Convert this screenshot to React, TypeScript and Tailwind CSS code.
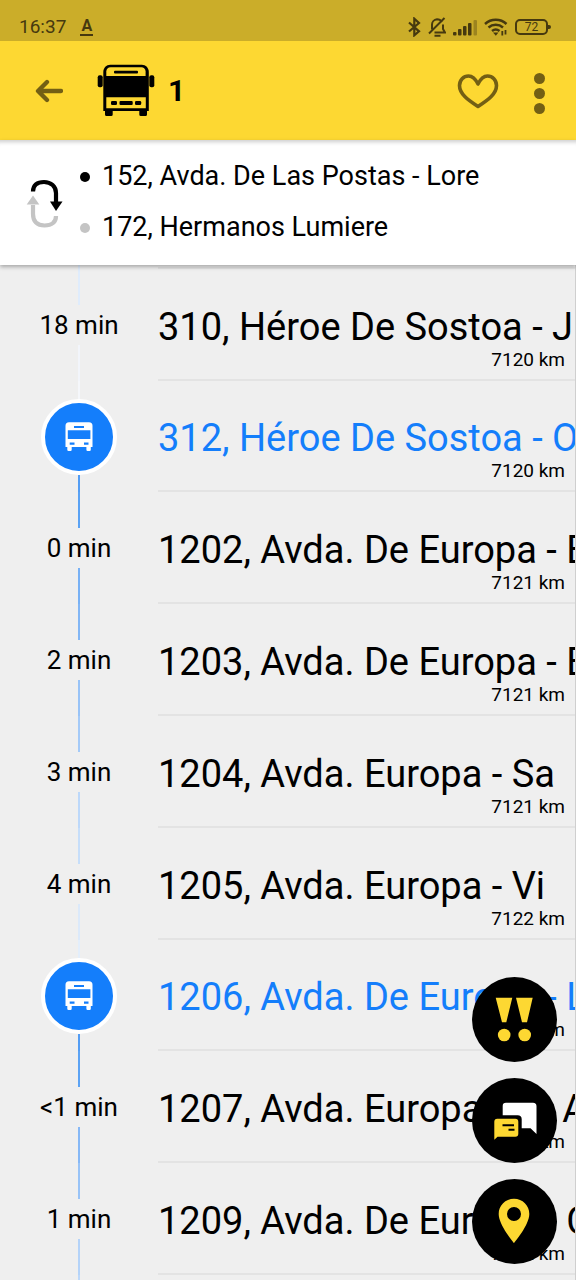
import clsx from "clsx";

interface Stop {
  name: string;
  distance: string;
  // Waiting time; stops without one have a bus standing at them
  eta?: string;
  lineAbove: string;
  lineBelow: string;
}

const stops: Stop[] = [
  { name: "310, Héroe De Sostoa - J", distance: "7120 km", eta: "18 min", lineAbove: "bg-[#dfecfc]", lineBelow: "bg-[#f2f5fb]" },
  { name: "312, Héroe De Sostoa - O", distance: "7120 km", lineAbove: "bg-[#f5f7fb]", lineBelow: "bg-[#539df4]" },
  { name: "1202, Avda. De Europa - E", distance: "7121 km", eta: "0 min", lineAbove: "bg-[#5aa2f4]", lineBelow: "bg-[#78b1f5]" },
  { name: "1203, Avda. De Europa - E", distance: "7121 km", eta: "2 min", lineAbove: "bg-[#82b6f5]", lineBelow: "bg-[#98c3f7]" },
  { name: "1204, Avda. Europa - Sa", distance: "7121 km", eta: "3 min", lineAbove: "bg-[#a4caf8]", lineBelow: "bg-[#bcd8fa]" },
  { name: "1205, Avda. Europa - Vi", distance: "7122 km", eta: "4 min", lineAbove: "bg-[#c6defa]", lineBelow: "bg-[#dbe9fa]" },
  { name: "1206, Avda. De Europa - L", distance: "7122 km", lineAbove: "bg-[#e3eefb]", lineBelow: "bg-[#539df4]" },
  { name: "1207, Avda. Europa - La A", distance: "7122 km", eta: "<1 min", lineAbove: "bg-[#5ca3f4]", lineBelow: "bg-[#86b8f6]" },
  { name: "1209, Avda. De Europa - C", distance: "7122 km", eta: "1 min", lineAbove: "bg-[#98c3f7]", lineBelow: "bg-[#b4d3f9]" },
];

function StatusBar() {
  return (
    <div className="flex h-[41px] shrink-0 items-center bg-[#cbad29] pt-3 pr-[25px] pl-[19px] text-[#46390f]">
      <span className="text-[19px] leading-6">16:37</span>
      <span className="ml-3.5 flex w-[13px] flex-col items-center border-b-2 border-current text-base leading-4 font-bold">
        A
      </span>
      <div className="ml-auto flex items-center gap-[7px]">
        <svg className="h-5 w-[13px]" viewBox="0 0 13 20" fill="none" stroke="currentColor" strokeWidth="2.2">
          <path d="m1 5.5 10 8.8-4.7 4V1.7L11 6 1 14.5" />
        </svg>
        <svg className="h-5 w-[18px]" viewBox="0 0 18 20" fill="none" stroke="currentColor" strokeWidth="2">
          <path d="M4 12.5V8a5.5 5.5 0 0 1 5-5.7c2.2 0 3.8 1 4.7 2.7M15 7.5V12l2 3.5H6.5" />
          <path d="M16.5 1 1 16.5M6.5 18.7h6" />
        </svg>
        <svg className="h-5 w-6" viewBox="0 0 24 20" fill="currentColor">
          <rect x="0" y="15" width="3.5" height="3.5" rx="1" />
          <rect x="5" y="12" width="3.5" height="6.5" rx="1" />
          <rect x="10" y="9" width="3.5" height="9.5" rx="1" />
          <rect x="15" y="6" width="3.5" height="12.5" rx="1" />
          <rect x="20.5" y="3" width="3.5" height="15.5" rx="1" opacity="0.35" />
        </svg>
        <svg className="h-5 w-6" viewBox="0 0 24 20" fill="none" stroke="currentColor" strokeWidth="2.5">
          <path d="M1 7a16 16 0 0 1 21.5 0M4.5 10.5a11 11 0 0 1 14.5 0M8 14a6 6 0 0 1 7.5 0" />
          <path d="m9 15.5 2.8 3.2 2.7-3.2Z" fill="currentColor" stroke="none" />
          <path d="M18.3 14v4.5M21.5 13v4.5" strokeWidth="1.8" />
        </svg>
        <span className="flex items-center">
          <span className="flex h-4 w-[33px] items-center justify-center rounded-[5px] border-2 border-current text-xs leading-3">
            72
          </span>
          <span className="h-1 w-[3px] rounded-r-sm bg-current" />
        </span>
      </div>
    </div>
  );
}

function LineBusIcon() {
  return (
    <svg className="h-[53px] w-[58px]" viewBox="0 0 58 53">
      <rect x="0.7" y="11.3" width="5" height="12" rx="2" />
      <rect x="52.3" y="11.3" width="5" height="12" rx="2" />
      <path d="M6.3 8c0-4 3-7.2 7-7.2h31.5c4 0 7 3.2 7 7.2v39H6.3Z" />
      <path d="M8 44h7.7v6.5a1.5 1.5 0 0 1-1.5 1.5H9.5A1.5 1.5 0 0 1 8 50.5ZM42.3 44H50v6.5a1.5 1.5 0 0 1-1.5 1.5h-4.7a1.5 1.5 0 0 1-1.5-1.5Z" />
      <g fill="#fdd832">
        <path d="M9.3 12V7.5c0-2.5 1.8-4.3 4.3-4.3h30.7c2.5 0 4.3 1.8 4.3 4.3V12Z" />
        <path d="M9.3 33.3h39.5v10.9H9.3Z" />
      </g>
      <rect x="17" y="6.7" width="24" height="2.8" rx="1" />
      <rect x="14" y="37" width="6" height="4" rx="1.3" />
      <rect x="22.5" y="37" width="13.2" height="4" rx="1" />
      <rect x="38" y="37" width="6.2" height="4" rx="1.3" />
    </svg>
  );
}

function AppBar() {
  return (
    <header className="flex h-[99px] shrink-0 items-center bg-[#fdd832] pr-[25px] pl-[35px] text-[#735f14]">
      <button type="button" aria-label="Back">
        <svg className="h-6 w-7" viewBox="0 0 28 24" fill="none" stroke="currentColor" strokeWidth="4.3" strokeLinecap="round" strokeLinejoin="round">
          <path d="M26 12H4M12 3l-9 9 9 9" />
        </svg>
      </button>
      <div className="ml-[34px] flex items-center gap-[13px] text-black">
        <LineBusIcon />
        <h1 className="text-[30px] leading-8 font-bold">1</h1>
      </div>
      <div className="ml-auto flex items-center gap-7">
        <button type="button" aria-label="Add to favourites">
          <svg className="h-9 w-[42px]" viewBox="0 0 42 36" fill="none" stroke="currentColor" strokeWidth="3.6" strokeLinejoin="round">
            <path d="M21 11C18.5 6 15.5 3 11.5 3 6.5 3 2.5 7 2.5 12.5c0 8.5 8.5 14.5 18.5 21 10-6.5 18.5-12.5 18.5-21C39.5 7 35.5 3 30.5 3c-4 0-7 3-9.5 8Z" />
          </svg>
        </button>
        <button type="button" aria-label="More options" className="flex w-6 flex-col items-center gap-1 pt-1.5">
          <span className="size-[11px] rounded-full bg-current" />
          <span className="size-[11px] rounded-full bg-current" />
          <span className="size-[11px] rounded-full bg-current" />
        </button>
      </div>
    </header>
  );
}

function RoutePanel() {
  return (
    <section className="z-10 flex shrink-0 items-center bg-white pt-[11px] pb-3 pl-[25px] shadow-[0_2px_4px_rgba(0,0,0,0.3),inset_0_6px_4px_-4px_rgba(0,0,0,0.2)]">
      <button type="button" aria-label="Change direction">
        <svg className="h-[52px] w-10" viewBox="0 -4 40 52" fill="none" strokeWidth="4.2">
          <path d="M8 11.5C8 5 12 2 19 2s12 4.5 12 11v10" stroke="#000" />
          <path d="M25 21.5h12.5L31 31Z" fill="#000" />
          <path d="M31 36c0 6-4 9.5-11.5 9.5S8 41.5 8 34V25" stroke="#c4c4c4" />
          <path d="M1.7 24.5h12.6L8 15.5Z" fill="#c4c4c4" />
        </svg>
      </button>
      <ul className="ml-[15px] min-w-0 text-[27px] leading-[51px] whitespace-nowrap">
        <li className="flex items-center gap-3">
          <span className="size-[10px] shrink-0 rounded-full bg-black" />
          152, Avda. De Las Postas - Lore
        </li>
        <li className="flex items-center gap-3">
          <span className="size-[10px] shrink-0 rounded-full bg-[#c4c4c4]" />
          172, Hermanos Lumiere
        </li>
      </ul>
    </section>
  );
}

function BusMarker() {
  return (
    <div className="flex size-[76px] items-center justify-center rounded-full border-4 border-white bg-[#147efb]">
      <svg className="h-[29px] w-7" viewBox="0 0 28 29" fill="#fff">
        <path
          fillRule="evenodd"
          d="M4 .3h20a3.5 3.5 0 0 1 3.5 3.5V25h-1.7v2.7a1.2 1.2 0 0 1-1.2 1.2h-2a1.2 1.2 0 0 1-1.2-1.2V25H6.7v2.7a1.2 1.2 0 0 1-1.2 1.2h-2a1.2 1.2 0 0 1-1.2-1.2V25H.5V3.8A3.5 3.5 0 0 1 4 .3ZM9 4v2h10V4ZM2.8 8.3V17h22.6V8.3ZM4.7 20.5v2.3h4.8v-2.3ZM19 20.5v2.3h4.5v-2.3Z"
        />
      </svg>
    </div>
  );
}

function StopRow({ stop }: { stop: Stop }) {
  const hasBus = !stop.eta;

  return (
    <li className={clsx("flex", hasBus ? "h-[111px]" : "h-28")}>
      <div className="flex w-[158px] shrink-0 flex-col items-center">
        <span className={clsx("w-0.5 flex-1", stop.lineAbove)} />
        {hasBus ? (
          <BusMarker />
        ) : (
          <span className="text-[26px] leading-10">{stop.eta}</span>
        )}
        <span className={clsx("w-0.5 flex-1", stop.lineBelow)} />
      </div>
      <div className="flex min-w-0 flex-1 flex-col justify-end border-b-2 border-[#e3e3e3] pb-2">
        <p
          className={clsx(
            "overflow-hidden text-[38px] leading-11 whitespace-nowrap",
            hasBus && "text-[#147efb]",
          )}
        >
          {stop.name}
        </p>
        <p className="pr-[10px] text-right text-[19px] leading-[22px]">
          {stop.distance}
        </p>
      </div>
    </li>
  );
}

function FloatingActions() {
  const button = "size-[85px] rounded-full bg-black";

  return (
    <div className="fixed right-[19px] bottom-4 z-20 flex flex-col gap-4">
      <button type="button" aria-label="Alerts" className={button}>
        <svg viewBox="0 0 85 85" fill="#fdd832">
          <path d="M23.7 20.7h16.6l-6 24.6H30ZM44 20.7h16.7L55 45.3h-5Z" />
          <circle cx="32.2" cy="58" r="6.3" />
          <circle cx="52.7" cy="58" r="6.3" />
        </svg>
      </button>
      <button type="button" aria-label="Comments" className={button}>
        <svg viewBox="0 0 85 85">
          <path d="M34 24.7h27a3.5 3.5 0 0 1 3.5 3.5V56l-6-5.7h-8.8V41a4 4 0 0 0-4-3.7h-15V28a3.3 3.3 0 0 1 3.3-3.3Z" fill="#fff" />
          <path d="M25.3 40.7h18a3 3 0 0 1 3 3v12a3 3 0 0 1-3 3H25.5l-3.2 3v-18a3 3 0 0 1 3-3Z" fill="#fdd832" />
          <path d="M30.5 47.3H42M36.5 51.7h6" stroke="#000" strokeWidth="2" />
        </svg>
      </button>
      <button type="button" aria-label="Show on map" className={button}>
        <svg viewBox="0 0 85 85" fill="#fdd832">
          <path
            fillRule="evenodd"
            d="M42 19.7c-8.6 0-15.3 6.7-15.3 15.2C26.7 46 42 64 42 64s15.3-18 15.3-29.1c0-8.5-6.7-15.2-15.3-15.2Zm0 8.3a7 7 0 1 1 0 14 7 7 0 0 1 0-14Z"
          />
        </svg>
      </button>
    </div>
  );
}

export default function App() {
  return (
    <div className="flex h-screen flex-col overflow-hidden bg-[#efefef] font-[Roboto,sans-serif] text-black">
      <StatusBar />
      <AppBar />
      <RoutePanel />
      <main className="min-h-0 flex-1 overflow-x-hidden overflow-y-auto border-r border-[#cfcfcf] [scrollbar-width:none]">
        <div className="flex h-1">
          <div className="flex w-[158px] shrink-0 justify-center">
            <span className="w-0.5 bg-[#dfecfc]" />
          </div>
          <div className="flex-1 border-b-2 border-[#e3e3e3]" />
        </div>
        <ul>
          {stops.map((stop) => (
            <StopRow key={stop.name} stop={stop} />
          ))}
        </ul>
        <div className="flex h-2 w-[158px] justify-center">
          <span className="w-0.5 bg-[#bcd8fa]" />
        </div>
      </main>
      <FloatingActions />
    </div>
  );
}
